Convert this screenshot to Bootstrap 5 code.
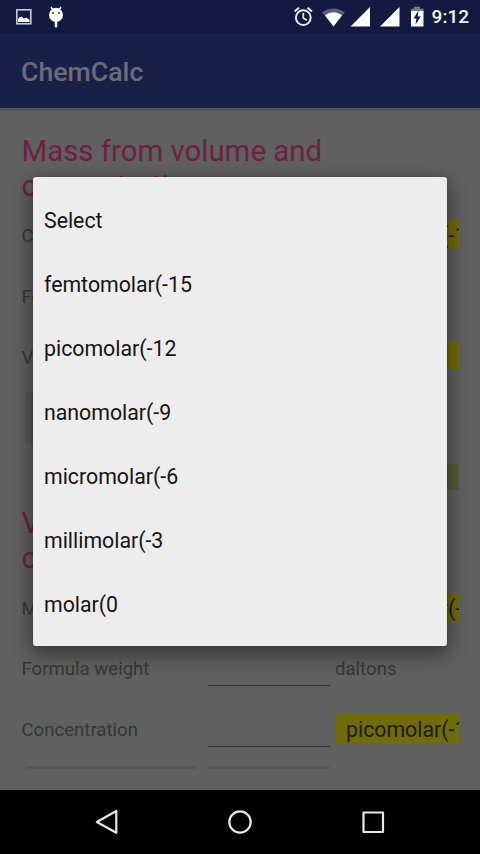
<!DOCTYPE html>
<html lang="en">
<head>
<meta charset="utf-8">
<meta name="viewport" content="width=device-width, initial-scale=1">
<title>ChemCalc</title>
<link href="https://cdn.jsdelivr.net/npm/bootstrap@5.3.0/dist/css/bootstrap.min.css" rel="stylesheet">
<style>
body{font-family:Roboto,"Liberation Sans",sans-serif;background:#000;width:480px;height:854px}
.screen{width:480px;height:854px}
.status{height:33px;background:#131940;color:#f4f5fa;padding-left:15px;padding-right:11px}
.clock{font-size:19px;font-weight:500;line-height:35px}
.appbar{height:75px;background:#192048;color:#6a6c7a;padding-left:21px}
.appname{font-size:26.7px;font-weight:500;line-height:1;padding-top:3px}
.page{height:682px;background:#606060;padding:23px 21px 0 21.5px;color:#373737;border-top:3px solid #535658}
.page>*{flex-shrink:0}
.heading{font-size:29.4px;line-height:35px;color:#6c2240;white-space:nowrap;height:72px}
.field{display:grid;grid-template-columns:186px 127.5px 124px;height:60.6px;font-size:18.6px;white-space:nowrap}
.field>span:not(.entry):not(.unit):not(.key){padding-top:2px}
.entry{border-bottom:1.5px solid #303030;height:47px;width:122px;align-self:start}
.unit{background:#706c0c;height:29px;font-size:21.3px;line-height:31px;padding-left:11px;color:#1d1b0a;margin-top:-3px}
.key{height:51px;background:#585858;border-radius:2px;box-shadow:0 0 2px #505050}
.result{width:124px;height:26px;background:#555b37}
.cut{height:24px;padding-left:4px;gap:11px;padding-top:6px}
.edge{height:3px;background:#565656;border-radius:2px;width:170px}
.edge-short{width:123px}
.chooser{left:33px;top:177px;width:414px;height:469px;background:#ededed;border-radius:3px;box-shadow:0 7px 20px 2px rgba(0,0,0,.42),0 0 2px rgba(0,0,0,.3);padding-top:12px}
.choice{height:64px;padding-left:11px;font-size:21.3px;color:#141414}
.navkeys{height:64px;background:#000}
</style>
<script src="https://cdn.jsdelivr.net/npm/bootstrap@5.3.0/dist/js/bootstrap.bundle.min.js"></script>
</head>
<body class="m-0 overflow-hidden">
<div class="screen position-relative d-flex flex-column overflow-hidden">
  <header class="status d-flex align-items-center justify-content-between">
    <svg width="52" height="33" viewBox="15 0 52 33">
      <rect x="16.8" y="9.8" width="14" height="14" fill="none" stroke="#c6c9da" stroke-width="1.6"/>
      <path d="M18 22v-3l1.500-1.800 2-.7 2.500 2 2.500-.7 3 2V22z" fill="#fff"/>
      <ellipse cx="56" cy="15" rx="7" ry="7.2" fill="#fff"/>
      <path d="M51 7l2 3M61 7l-2 3" stroke="#fff" stroke-width="1.4"/>
      <path d="M56 22v4.2" stroke="#fff" stroke-width="2.4" stroke-linecap="round"/>
      <circle cx="53" cy="13" r=".9" fill="#131940"/><circle cx="59" cy="13" r=".9" fill="#131940"/>
    </svg>
    <div class="d-flex align-items-center">
      <svg width="139" height="33" viewBox="293 0 139 33">
        <circle cx="303.3" cy="17.6" r="7.4" fill="none" stroke="#e9eaf3" stroke-width="2"/>
        <path d="M294.6 11.6l4.4-3.8M312 11.6l-4.4-3.8" stroke="#e9eaf3" stroke-width="2"/>
        <path d="M303.3 13v5l3.6 2.2" fill="none" stroke="#e9eaf3" stroke-width="1.7"/>
        <path d="M333.5 26.500L322 12.300Q333.500 4.600 345 12.300Z" fill="#5a5e7c"/>
        <path d="M333.500 26.500L325 15.200Q333.500 9.500 342 15.200Z" fill="#fff"/>
        <path d="M370 7v19.500h-19.500zM399.500 7v19.500H380z" fill="#fff"/>
        <path d="M414 6.700h6v2h3.500V12H411V8.700h3z" fill="#777a8c"/>
        <path d="M411 11h12.500v15.500H411z" fill="#fff"/>
        <path d="M418.500 10.500l-5 8h3l-1 6 5.300-8h-3z" fill="#131940"/>
      </svg>
      <span class="clock">9:12</span>
    </div>
  </header>
  <div class="appbar d-flex align-items-center"><h1 class="appname m-0">ChemCalc</h1></div>
  <main class="page d-flex flex-column overflow-hidden">
    <h2 class="heading m-0 fw-normal">Mass from volume and<br>concentration</h2>
    <div class="field align-items-center"><span>Concentration</span><span class="entry"></span><span class="unit overflow-hidden">picomolar(-12</span></div>
    <div class="field align-items-center"><span>Formula weight</span><span class="entry"></span><span>daltons</span></div>
    <div class="field align-items-center"><span>Volume</span><span class="entry"></span><span class="unit overflow-hidden">liter</span></div>
    <div class="field align-items-center"><span class="key ms-1"></span><span class="key"></span></div>
    <div class="d-flex justify-content-end align-items-center pb-3 pt-3"><span class="result"></span></div>
    <h2 class="heading m-0 fw-normal">Volume from mass and<br>concentration</h2>
    <div class="field align-items-center"><span>Mass</span><span class="entry"></span><span class="unit overflow-hidden">nanomolar(-9</span></div>
    <div class="field align-items-center"><span>Formula weight</span><span class="entry"></span><span>daltons</span></div>
    <div class="field align-items-center"><span>Concentration</span><span class="entry"></span><span class="unit overflow-hidden">picomolar(-12</span></div>
    <div class="cut d-flex"><span class="edge"></span><span class="edge edge-short"></span></div>
  </main>
  <div class="chooser position-absolute" role="listbox">
    <div class="choice d-flex align-items-center">Select</div>
    <div class="choice d-flex align-items-center">femtomolar(-15</div>
    <div class="choice d-flex align-items-center">picomolar(-12</div>
    <div class="choice d-flex align-items-center">nanomolar(-9</div>
    <div class="choice d-flex align-items-center">micromolar(-6</div>
    <div class="choice d-flex align-items-center">millimolar(-3</div>
    <div class="choice d-flex align-items-center">molar(0</div>
  </div>
  <nav class="navkeys">
    <svg class="d-block" width="480" height="64" viewBox="0 790 480 64" fill="none" stroke="#e8e8e8" stroke-width="2.200" stroke-linejoin="round">
      <path d="M116.300 811v21.800L96.800 822z"/><circle cx="240" cy="822" r="10.700"/><rect x="363.500" y="812.500" width="19.500" height="19.500"/>
    </svg>
  </nav>
</div>
</body>
</html>
